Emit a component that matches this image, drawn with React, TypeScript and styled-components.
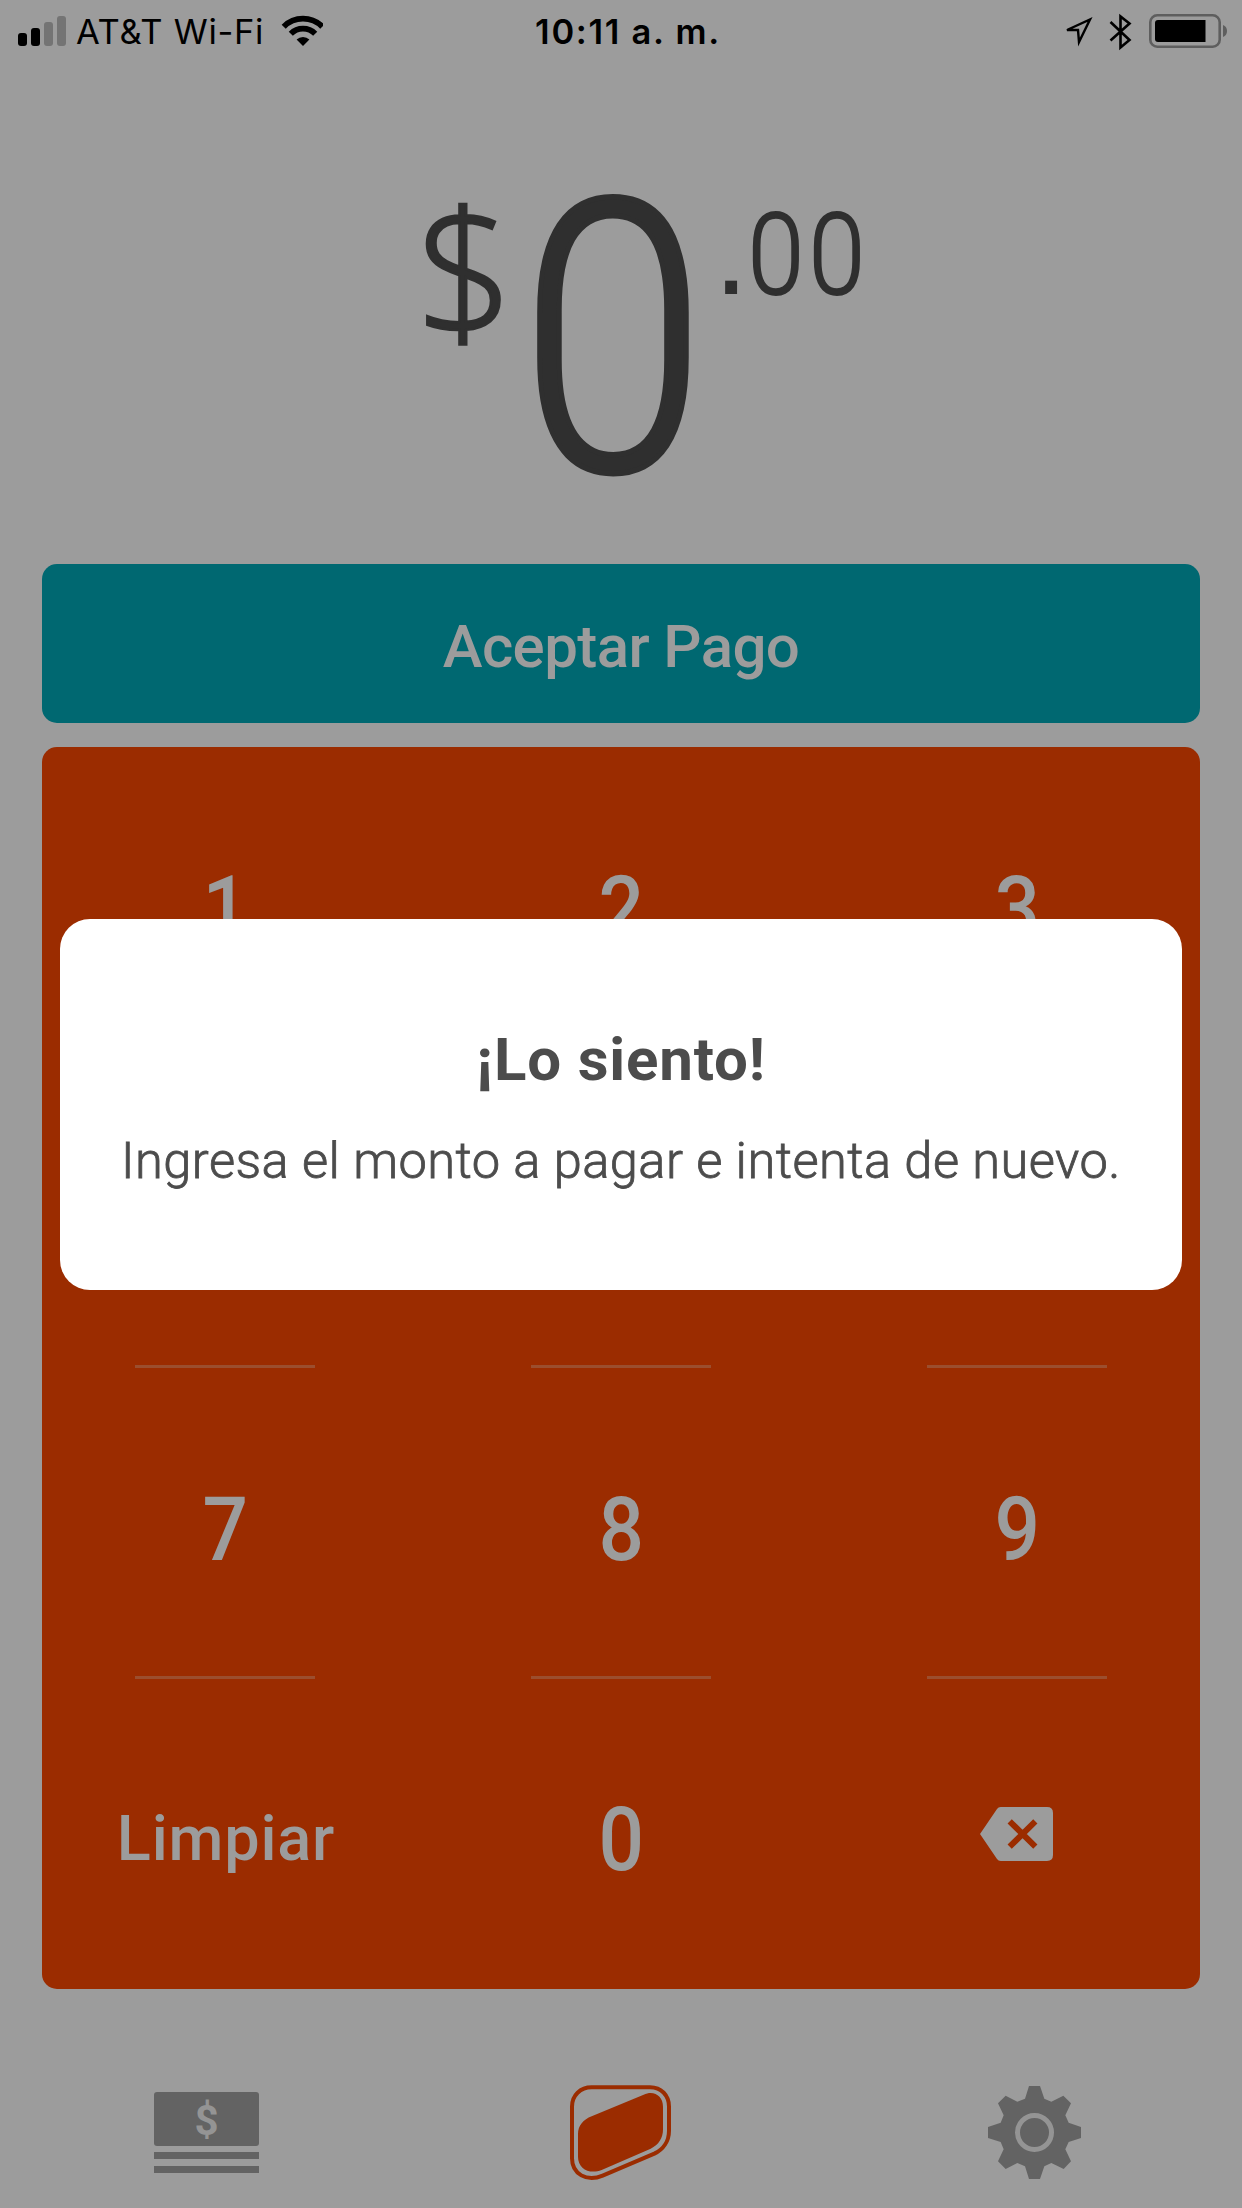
import React from "react";
import styled, { createGlobalStyle } from "styled-components";

const colors = {
  page: "#9c9c9c",
  ink: "#2f2f2f",
  teal: "#006871",
  orange: "#9b2c00",
  divider: "#9b4e2e",
  key: "#9c9c9c",
  icon: "#636363",
  iconDetail: "#949494",
  modalText: "#4c4c4c",
};

const GlobalStyle = createGlobalStyle`
  * { box-sizing: border-box; }
  body { margin: 0; background: ${colors.page}; }
  button { border: 0; padding: 0; background: none; font: inherit; color: inherit; }
`;

const Screen = styled.div`
  position: relative;
  display: flex;
  flex-direction: column;
  width: 1242px;
  height: 2208px;
  overflow: hidden;
  background: ${colors.page};
  font-family: Roboto, "Liberation Sans", sans-serif;
`;

const StatusBar = styled.header`
  display: grid;
  grid-template-columns: 1fr auto 1fr;
  align-items: center;
  height: 62px;
  padding: 0 14px 0 18px;
  color: #000;
  font-family: Inter, "Liberation Sans", sans-serif;
  font-size: 34.5px;
  line-height: 62px;
`;

const StatusGroup = styled.div<{ $end?: boolean }>`
  display: flex;
  align-items: center;
  justify-content: ${(p) => (p.$end ? "flex-end" : "flex-start")};
  height: 62px;
`;

const Carrier = styled.span`
  margin: 1px 17px 0 9px;
  letter-spacing: 0.7px;
  white-space: nowrap;
`;

const Clock = styled.time`
  margin: 1px 0 0 10px;
  font-weight: 600;
  letter-spacing: 1.7px;
  white-space: nowrap;
`;

const Amount = styled.section`
  display: flex;
  align-items: flex-start;
  height: 502px;
  padding-left: 426px;
  color: ${colors.ink};
`;

const Glyph = styled.span<{ $w: number; $scale?: number }>`
  display: flex;
  justify-content: center;
  flex: none;
  width: ${(p) => p.$w}px;
  transform: scaleX(${(p) => p.$scale ?? 1});
`;

const Currency = styled(Glyph)`
  margin-top: 131px;
  font-family: "Open Sans", "Noto Sans", sans-serif;
  font-size: 171px;
  font-weight: 300;
  line-height: 150px;
  -webkit-text-stroke: 2.6px ${colors.ink};
`;

const Whole = styled(Glyph)`
  margin: 138px 0 0 33px;
  font-size: 379px;
  font-weight: 300;
  line-height: 282px;
  -webkit-text-stroke: 5.5px ${colors.ink};
`;

const Cents = styled.div`
  display: flex;
  margin: 151px 0 0 31px;
  font-size: 114px;
  font-weight: 300;
  line-height: 84px;
  -webkit-text-stroke: 1.9px ${colors.ink};
`;

const DecimalPoint = styled(Glyph)`
  margin-top: -4px;
  font-family: "Liberation Sans", sans-serif;
  font-size: 125px;
  font-weight: 400;
  -webkit-text-stroke: 0;
`;

const PayButton = styled.button`
  flex: none;
  height: 159px;
  margin: 0 42px 24px;
  padding-top: 5px;
  border-radius: 15px;
  background: ${colors.teal};
  color: ${colors.key};
  font-size: 60px;
  font-weight: 500;
  letter-spacing: -0.6px;
`;

const Keypad = styled.section`
  display: grid;
  flex: none;
  grid-template-columns: 366px 426px 366px;
  grid-template-rows: repeat(4, 310.5px);
  height: 1242px;
  margin: 0 42px;
  border-radius: 15px;
  background: ${colors.orange};
  color: ${colors.key};
`;

const Key = styled.button<{ $small?: boolean; $last?: boolean }>`
  display: grid;
  grid-template-rows: 1fr 3px;
  justify-items: center;
  align-items: center;
  font-size: ${(p) => (p.$small ? 63 : 89)}px;
  font-weight: 500;
  letter-spacing: ${(p) => (p.$small ? 0.8 : 0)}px;

  &::after {
    content: "";
    grid-row: 2;
    width: 180px;
    height: 3px;
    background: ${(p) => (p.$last ? "transparent" : colors.divider)};
  }
`;

const KeyLabel = styled.span<{ $narrow?: boolean }>`
  padding-top: ${(p) => (p.$narrow ? 15 : 13)}px;
  padding-left: ${(p) => (p.$narrow ? 0 : 2)}px;
  transform: scaleX(${(p) => (p.$narrow ? 0.9 : 1)});
`;

const TabBar = styled.nav`
  display: flex;
  align-items: flex-start;
  justify-content: space-between;
  padding: 94px 161px 0 154px;
`;

const Tab = styled.button<{ $top?: number; $right?: number }>`
  display: flex;
  margin-top: ${(p) => p.$top ?? 0}px;
  margin-right: ${(p) => p.$right ?? 0}px;
`;

const Banknotes = styled.span`
  display: flex;
  flex-direction: column;
  gap: 6.2px;
  width: 105px;
`;

const Note = styled.span`
  height: 54px;
  padding-top: 1px;
  border-radius: 3px;
  background: ${colors.icon};
  color: ${colors.iconDetail};
  font-size: 42px;
  font-weight: 700;
  line-height: 55px;
  text-align: center;
`;

const NoteEdge = styled.span`
  height: 7.2px;
  background: ${colors.icon};
`;

const Overlay = styled.div`
  position: absolute;
  inset: 0;
  display: flex;
  align-items: flex-start;
  justify-content: center;
  padding-top: 919px;
`;

const Dialog = styled.div`
  display: flex;
  flex-direction: column;
  align-items: center;
  width: 1122px;
  height: 371px;
  padding-top: 105px;
  border-radius: 30px;
  background: #fff;
  color: ${colors.modalText};
`;

const DialogTitle = styled.h1`
  margin: 0;
  font-size: 60px;
  font-weight: 700;
  line-height: 72px;
  letter-spacing: 0.8px;
`;

const DialogText = styled.p`
  margin: 35px 0 0;
  font-size: 50.6px;
  font-weight: 300;
  line-height: 60px;
  letter-spacing: 0.45px;
  white-space: nowrap;
  -webkit-text-stroke: 0.8px ${colors.modalText};
`;

const SignalIcon = () => (
  <svg width="49" height="62" viewBox="18 0 49 62">
    <rect x="18" y="32" width="9" height="13" rx="3" />
    <rect x="31" y="27" width="9" height="18" rx="3" />
    <rect x="44" y="21" width="9" height="24" rx="3" fill="#747474" />
    <rect x="57" y="15" width="9" height="30" rx="3" fill="#747474" />
  </svg>
);

const WifiIcon = () => (
  <svg width="42" height="62" viewBox="281 0 42 62" fill="none" stroke="#000" strokeWidth="5.8">
    <path d="M283.7 25.7A27.3 27.3 0 0 1 322.3 25.7" />
    <path d="M290.8 32.8A17.2 17.2 0 0 1 315.2 32.8" />
    <path d="M303 45L296.6 38.6A9 9 0 0 1 309.4 38.6Z" fill="#000" stroke="none" />
  </svg>
);

const SystemIcons = () => (
  <svg width="166" height="62" viewBox="1062 0 166 62" fill="none">
    <path d="M1067 29L1090 18.5L1079 41L1078 29Z" stroke="#000" strokeWidth="2.4" />
    <path d="M1110.5 21L1129.5 39L1120.5 46.5V15.5L1129.5 22.5L1110.5 39.5" stroke="#000" strokeWidth="2.6" />
    <rect x="1150.3" y="14.3" width="69.4" height="31.4" rx="7" stroke="#5e5e5e" strokeWidth="2.6" />
    <path d="M1158 19H1205.5V41H1158Q1155 41 1155 38V22Q1155 19 1158 19Z" fill="#000" />
    <path d="M1223 24Q1227 25.5 1227 30T1223 36Z" fill="#5e5e5e" />
  </svg>
);

const Backspace = styled.svg`
  display: block;
  margin: 4px 1px 0 0;
`;

const BackspaceIcon = () => (
  <Backspace width="73" height="54" viewBox="241 321 219 162">
    <path
      fill={colors.key}
      d="M303 321H442Q460 321 460 339V465Q460 483 442 483H303Q296 483 292 477L241 402L292 327Q296 321 303 321Z"
    />
    <path d="M330 364L407 440M407 364L330 440" stroke={colors.orange} strokeWidth="18" />
  </Backspace>
);

const LogoIcon = () => (
  <svg width="104" height="99" viewBox="84 69 312 297">
    <path
      fill="none"
      stroke={colors.orange}
      strokeWidth="12"
      d="M155 82H330C364 82 387 106 387 140V212C387 243 370 268 343 281L188 347C140 367 96 342 96 295V140C96 106 121 82 155 82Z"
    />
    <path
      fill={colors.orange}
      d="M155 169L311 104C342 90 369 108 369 140V208C369 234 356 255 332 266L185 330C148 344 114 326 114 290V222C114 197 130 179 155 169Z"
    />
  </svg>
);

const GearIcon = () => (
  <svg width="93" height="93" viewBox="84 78 279 279">
    <path
      fill={colors.icon}
      d="M207 78H240L253 116L274 125L310 107L333 130L316 166L326 188L363 201V234L326 246L316 268L333 304L311 327L274 309L253 319L240 357H207L195 319L172 309L137 327L114 304L131 268L122 246L84 234V201L122 188L131 166L114 130L137 107L172 125L195 116Z"
    />
    <circle cx="223.5" cy="217.5" r="51" fill="none" stroke={colors.iconDetail} strokeWidth="15" />
  </svg>
);

const digits = ["1", "2", "3", "4", "5", "6", "7", "8", "9"];

// The middle row sits fully behind the dialog, so its labels are not painted.
const coveredDigits = new Set(["4", "5", "6"]);

export default function App() {
  return (
    <Screen>
      <GlobalStyle />
      <StatusBar>
        <StatusGroup>
          <SignalIcon />
          <Carrier>AT&amp;T Wi-Fi</Carrier>
          <WifiIcon />
        </StatusGroup>
        <Clock>10:11 a. m.</Clock>
        <StatusGroup $end>
          <SystemIcons />
        </StatusGroup>
      </StatusBar>

      <Amount>
        <Currency $w={78}>$</Currency>
        <Whole $w={152} $scale={0.885}>0</Whole>
        <Cents>
          <DecimalPoint $w={22}>.</DecimalPoint>
          <Glyph $w={68} $scale={0.89}>0</Glyph>
          <Glyph $w={54} $scale={0.89}>0</Glyph>
        </Cents>
      </Amount>

      <PayButton>Aceptar Pago</PayButton>

      <Keypad>
        {digits.map((d) => (
          <Key key={d} aria-label={d}>
            {!coveredDigits.has(d) && <KeyLabel $narrow>{d}</KeyLabel>}
          </Key>
        ))}
        <Key $small $last>
          <KeyLabel>Limpiar</KeyLabel>
        </Key>
        <Key $last>
          <KeyLabel $narrow>0</KeyLabel>
        </Key>
        <Key $last aria-label="Borrar">
          <BackspaceIcon />
        </Key>
      </Keypad>

      <TabBar>
        <Tab $top={9}>
          <Banknotes>
            <Note>$</Note>
            <NoteEdge />
            <NoteEdge />
          </Banknotes>
        </Tab>
        <Tab $right={8}>
          <LogoIcon />
        </Tab>
        <Tab $top={3}>
          <GearIcon />
        </Tab>
      </TabBar>

      <Overlay>
        <Dialog role="alertdialog">
          <DialogTitle>¡Lo siento!</DialogTitle>
          <DialogText>Ingresa el monto a pagar e intenta de nuevo.</DialogText>
        </Dialog>
      </Overlay>
    </Screen>
  );
}
